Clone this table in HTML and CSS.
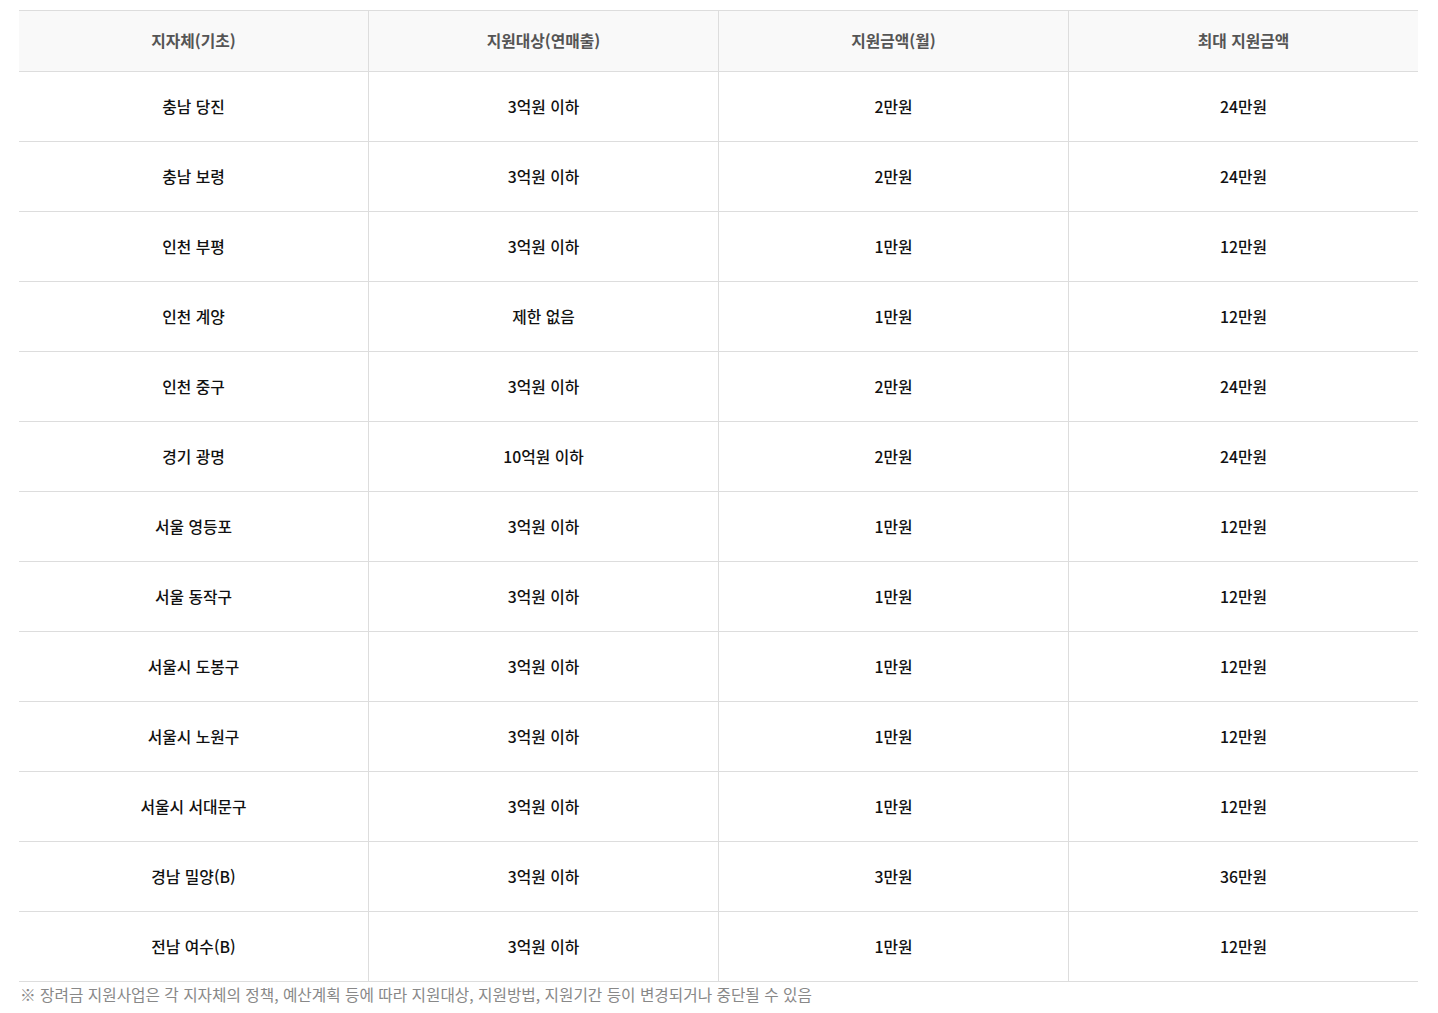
FILE: index.html
```html
<!DOCTYPE html>
<html lang="ko">
<head>
<meta charset="utf-8">
<link rel="stylesheet" href="styles.css">
</head>
<body>
<div class="wrap">
<table class="tbl">
<thead>
<tr><th>지자체(기초)</th><th>지원대상(연매출)</th><th>지원금액(월)</th><th>최대 지원금액</th></tr>
</thead>
<tbody>
<tr><td>충남 당진</td><td>3억원 이하</td><td>2만원</td><td>24만원</td></tr>
<tr><td>충남 보령</td><td>3억원 이하</td><td>2만원</td><td>24만원</td></tr>
<tr><td>인천 부평</td><td>3억원 이하</td><td>1만원</td><td>12만원</td></tr>
<tr><td>인천 계양</td><td>제한 없음</td><td>1만원</td><td>12만원</td></tr>
<tr><td>인천 중구</td><td>3억원 이하</td><td>2만원</td><td>24만원</td></tr>
<tr><td>경기 광명</td><td>10억원 이하</td><td>2만원</td><td>24만원</td></tr>
<tr><td>서울 영등포</td><td>3억원 이하</td><td>1만원</td><td>12만원</td></tr>
<tr><td>서울 동작구</td><td>3억원 이하</td><td>1만원</td><td>12만원</td></tr>
<tr><td>서울시 도봉구</td><td>3억원 이하</td><td>1만원</td><td>12만원</td></tr>
<tr><td>서울시 노원구</td><td>3억원 이하</td><td>1만원</td><td>12만원</td></tr>
<tr><td>서울시 서대문구</td><td>3억원 이하</td><td>1만원</td><td>12만원</td></tr>
<tr><td>경남 밀양(B)</td><td>3억원 이하</td><td>3만원</td><td>36만원</td></tr>
<tr><td>전남 여수(B)</td><td>3억원 이하</td><td>1만원</td><td>12만원</td></tr>
</tbody>
</table>
<p class="note">※ 장려금 지원사업은 각 지자체의 정책, 예산계획 등에 따라 지원대상, 지원방법, 지원기간 등이 변경되거나 중단될 수 있음</p>
</div>
</body>
</html>
```
FILE: styles.css
```css
html, body { margin: 0; padding: 0; background: #fff; }
body { font-family: "Noto Sans CJK KR", "Noto Sans", sans-serif; }
.wrap { padding: 10px 0 0 19px; }
.tbl {
  width: 1399px;
  border-collapse: collapse;
  table-layout: fixed;
  border-top: 1px solid #ddd;
}
.tbl th, .tbl td {
  width: 25%;
  text-align: center;
  font-size: 15.8px;
  padding: 0;
  border-bottom: 1px solid #ddd;
  border-left: 1px solid #ddd;
}
.tbl th:first-child, .tbl td:first-child { border-left: none; }
.tbl th {
  height: 58px;
  padding-bottom: 2px;
  background: #f9f9f9;
  color: #555;
  font-weight: 700;
}
.tbl td {
  height: 68px;
  padding-bottom: 1px;
  color: #111;
  font-weight: 500;
}
.note {
  margin: 2px 0 0 1px;
  font-size: 15.7px;
  color: #888;
  line-height: 22px;
}
```
